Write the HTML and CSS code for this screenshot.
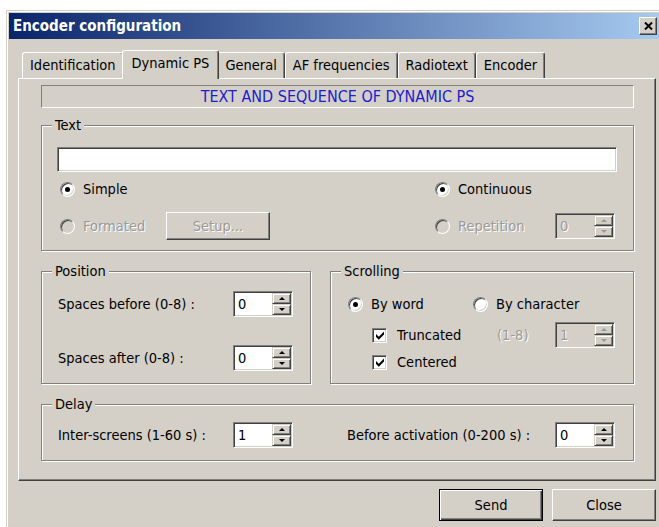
FILE: index.html
```html
<!DOCTYPE html>
<html lang="en">
<head>
<meta charset="utf-8">
<title>Encoder configuration</title>
<link rel="stylesheet" href="styles.css">
</head>
<body>
<div class="window">
  <div class="titlebar">
    <span class="title">Encoder configuration</span>
    <span class="caption-btn" aria-label="Close">
      <svg width="9" height="8" viewBox="0 0 9 8"><path d="M1 0.5 L8 7.5 M8 0.5 L1 7.5" stroke="#000" stroke-width="2" fill="none"/></svg>
    </span>
  </div>

  <div class="client">
    <div class="tabs">
      <span class="tab">Identification</span>
      <span class="tab tab-active">Dynamic PS</span>
      <span class="tab">General</span>
      <span class="tab">AF frequencies</span>
      <span class="tab">Radiotext</span>
      <span class="tab">Encoder</span>
    </div>

    <div class="panel">
      <div class="banner">TEXT AND SEQUENCE OF DYNAMIC PS</div>

      <section class="group group-text">
        <span class="group-title">Text</span>
        <div class="edit"></div>
        <div class="text-options">
          <label class="opt"><span class="radio on"></span>Simple</label>
          <label class="opt"><span class="radio on"></span>Continuous</label>
          <div class="opt-line">
            <label class="opt opt-formated disabled"><span class="radio"></span>Formated</label>
            <span class="btn btn-setup disabled">Setup...</span>
          </div>
          <div class="opt-line">
            <label class="opt opt-repetition disabled"><span class="radio"></span>Repetition</label>
            <div class="spin spin-disabled">
              <span class="spin-value">0</span>
              <span class="spin-arrows"><span class="spin-up"></span><span class="spin-down"></span></span>
            </div>
          </div>
        </div>
      </section>

      <div class="group-row">
        <section class="group group-position">
          <span class="group-title">Position</span>
          <div class="field-grid">
            <span class="field-label">Spaces before (0-8) :</span>
            <div class="spin">
              <span class="spin-value">0</span>
              <span class="spin-arrows"><span class="spin-up"></span><span class="spin-down"></span></span>
            </div>
            <span class="field-label">Spaces after (0-8) :</span>
            <div class="spin">
              <span class="spin-value">0</span>
              <span class="spin-arrows"><span class="spin-up"></span><span class="spin-down"></span></span>
            </div>
          </div>
        </section>

        <section class="group group-scrolling">
          <span class="group-title">Scrolling</span>
          <div class="scroll-line scroll-mode">
            <label class="opt opt-byword"><span class="radio on"></span>By word</label>
            <label class="opt"><span class="radio"></span>By character</label>
          </div>
          <div class="scroll-line scroll-trunc">
            <label class="opt opt-truncated"><span class="check"><svg width="10" height="10" viewBox="0 0 10 10"><polygon points="1,4 3.8,6.8 9,1.6 9,4.6 3.8,9.8 1,7" fill="#000"/></svg></span>Truncated</label>
            <span class="range-label disabled">(1-8)</span>
            <div class="spin spin-disabled">
              <span class="spin-value">1</span>
              <span class="spin-arrows"><span class="spin-up"></span><span class="spin-down"></span></span>
            </div>
          </div>
          <div class="scroll-line scroll-center">
            <label class="opt"><span class="check"><svg width="10" height="10" viewBox="0 0 10 10"><polygon points="1,4 3.8,6.8 9,1.6 9,4.6 3.8,9.8 1,7" fill="#000"/></svg></span>Centered</label>
          </div>
        </section>
      </div>

      <section class="group group-delay">
        <span class="group-title">Delay</span>
        <div class="delay-line">
          <span class="field-label label-inter">Inter-screens (1-60 s) :</span>
          <div class="spin">
            <span class="spin-value">1</span>
            <span class="spin-arrows"><span class="spin-up"></span><span class="spin-down"></span></span>
          </div>
          <span class="field-label label-before">Before activation (0-200 s) :</span>
          <div class="spin">
            <span class="spin-value">0</span>
            <span class="spin-arrows"><span class="spin-up"></span><span class="spin-down"></span></span>
          </div>
        </div>
      </section>
    </div>

    <div class="actions">
      <span class="btn btn-default">Send</span>
      <span class="btn">Close</span>
    </div>
  </div>
</div>
</body>
</html>
```

FILE: styles.css
```css
* {
  box-sizing: border-box;
}

html,
body {
  margin: 0;
  padding: 0;
  overflow: hidden;
  background: #fff;
}

body {
  font-family: "DejaVu Sans Condensed", "DejaVu Sans", "Liberation Sans", sans-serif;
  font-stretch: condensed;
  font-size: 14.5px;
  line-height: 16px;
  color: #000;
}

/* ---- window frame ---- */
.window {
  margin: 10px 0 0 6px;
  width: 657px;
  height: 540px;
  padding: 2px;
  background: #d4d0c8;
  border: 1px solid;
  border-color: #d4d0c8 #404040 #404040 #d4d0c8;
  box-shadow: inset 1px 1px #fff, inset -1px -1px #808080;
}

.titlebar {
  height: 26px;
  display: flex;
  align-items: center;
  justify-content: space-between;
  padding: 0 3px 0 4px;
  background: linear-gradient(90deg, #0a246a 0%, #a6caf0 100%);
}

.title {
  color: #fff;
  font-weight: bold;
  font-size: 15px;
  white-space: nowrap;
}

.caption-btn {
  width: 18px;
  height: 18px;
  display: flex;
  align-items: center;
  justify-content: center;
  background: #d4d0c8;
  border: 1px solid;
  border-color: #fff #404040 #404040 #fff;
  box-shadow: inset -1px -1px #808080;
}

.client {
  padding-top: 11px;
}

/* ---- tab strip ---- */
.tabs {
  display: flex;
  align-items: flex-end;
  height: 29px;
  margin-left: 13px;
  position: relative;
  z-index: 1;
}

.tab {
  height: 26px;
  margin-bottom: 1px;
  padding: 0 7px;
  border: 1px solid;
  border-bottom: 0;
  border-color: #fff #404040 #fff #fff;
  border-radius: 3px 3px 0 0;
  box-shadow: inset -1px 0 #808080;
  background: #d4d0c8;
  line-height: 24px;
  white-space: nowrap;
}

.tab-active {
  position: relative;
  z-index: 1;
  height: 29px;
  margin: 0 -2px;
  padding: 0 9px;
}

.panel {
  margin: -1px 0 0 9px;
  width: 638px;
  padding: 6px 21px 19px 22px;
  border: 1px solid;
  border-color: #fff #404040 #404040 #fff;
  box-shadow: inset -1px -1px #808080;
}

.banner {
  height: 23px;
  border: 1px solid;
  border-color: #808080 #fff #fff #808080;
  color: #1c1cd0;
  font-size: 16px;
  line-height: 21px;
  text-align: center;
}

/* ---- etched group boxes ---- */
.group {
  position: relative;
  border: 1px solid #808080;
  box-shadow: 1px 1px 0 #fff, inset 1px 1px 0 #fff;
}

.group-title {
  position: absolute;
  top: -9px;
  left: 10px;
  padding: 0 3px;
  line-height: 16px;
  background: #d4d0c8;
}

.group-text {
  margin-top: 17px;
  padding: 21px 16px 10px 15px;
}

.group-row {
  display: flex;
  gap: 19px;
  margin-top: 20px;
}

.group-position {
  width: 270px;
  padding: 19px 0 12px 16px;
}

.group-scrolling {
  width: 304px;
  padding: 21px 0 13px 17px;
}

.group-delay {
  margin-top: 20px;
  padding: 17px 0 12px 16px;
}

/* ---- edit field ---- */
.edit {
  height: 25px;
  background: #fff;
  border: 1px solid;
  border-color: #808080 #fff #fff #808080;
  box-shadow: inset 1px 1px #404040, inset -1px -1px #d4d0c8;
}

.text-options {
  display: grid;
  grid-template-columns: 375px 1fr;
  grid-template-rows: 22px 28px;
  row-gap: 12px;
  margin-top: 6px;
  padding-left: 3px;
}

.opt-line {
  display: flex;
  align-items: center;
}

.opt {
  display: flex;
  align-items: center;
  gap: 8px;
  white-space: nowrap;
}

.opt-formated {
  width: 106px;
}

.opt-repetition {
  width: 120px;
}

.disabled {
  color: #9a9a9a;
  text-shadow: 1px 1px 0 #fff;
}

/* ---- radio buttons and check boxes ---- */
.radio {
  flex: none;
  width: 15px;
  height: 15px;
  display: flex;
  align-items: center;
  justify-content: center;
  border-radius: 50%;
  border: 1px solid;
  border-color: #808080 #fff #fff #808080;
  box-shadow: inset 1px 1px #404040, inset -1px -1px #d4d0c8;
  background: #fff;
}

.radio.on::after {
  content: "";
  width: 5px;
  height: 5px;
  border-radius: 50%;
  background: #000;
}

.disabled .radio {
  background: #d4d0c8;
}

.check {
  flex: none;
  width: 15px;
  height: 15px;
  display: flex;
  align-items: center;
  justify-content: center;
  border: 1px solid;
  border-color: #808080 #fff #fff #808080;
  box-shadow: inset 1px 1px #404040, inset -1px -1px #d4d0c8;
  background: #fff;
}

.check svg {
  display: block;
}

/* ---- up/down spin boxes ---- */
.spin {
  flex: none;
  display: flex;
  width: 60px;
  height: 26px;
  padding: 1px;
  background: #fff;
  border: 1px solid;
  border-color: #808080 #fff #fff #808080;
  box-shadow: inset 1px 1px #404040, inset -1px -1px #d4d0c8;
}

.spin-value {
  flex: 1;
  padding-left: 3px;
  line-height: 22px;
}

.spin-arrows {
  display: flex;
  flex-direction: column;
  width: 19px;
}

.spin-up,
.spin-down {
  flex: 1;
  display: flex;
  align-items: center;
  justify-content: center;
  background: #d4d0c8;
  border: 1px solid;
  border-color: #d4d0c8 #404040 #404040 #d4d0c8;
  box-shadow: inset 1px 1px #fff, inset -1px -1px #808080;
}

.spin-up::after {
  content: "";
  border-left: 3px solid transparent;
  border-right: 3px solid transparent;
  border-bottom: 3px solid #000;
}

.spin-down::after {
  content: "";
  border-left: 3px solid transparent;
  border-right: 3px solid transparent;
  border-top: 3px solid #000;
}

.spin-disabled {
  background: #d4d0c8;
}

.spin-disabled .spin-value {
  color: #9a9a9a;
  text-shadow: 1px 1px 0 #fff;
}

.spin-disabled .spin-up::after {
  border-bottom-color: #9a9a9a;
}

.spin-disabled .spin-down::after {
  border-top-color: #9a9a9a;
}

/* ---- position group ---- */
.field-grid {
  display: grid;
  grid-template-columns: 175px 60px;
  grid-auto-rows: 26px;
  row-gap: 28px;
  align-items: center;
}

.field-label {
  white-space: nowrap;
}

/* ---- scrolling group ---- */
.scroll-line {
  display: flex;
  align-items: center;
}

.scroll-mode {
  height: 22px;
}

.opt-byword {
  width: 125px;
}

.scroll-trunc {
  height: 26px;
  margin-top: 7px;
  padding-left: 24px;
}

.opt-truncated {
  width: 125px;
  gap: 10px;
}

.range-label {
  width: 58px;
}

.scroll-center {
  height: 16px;
  margin-top: 6px;
  padding-left: 24px;
}

.scroll-center .opt {
  gap: 10px;
}

/* ---- delay group ---- */
.delay-line {
  display: flex;
  align-items: center;
}

.label-inter {
  width: 175px;
}

.label-before {
  width: 208px;
  margin-left: 54px;
}

/* ---- push buttons ---- */
.btn {
  display: flex;
  align-items: center;
  justify-content: center;
  width: 104px;
  height: 32px;
  background: #d4d0c8;
  border: 1px solid;
  border-color: #fff #404040 #404040 #fff;
  box-shadow: inset -1px -1px #808080, inset 1px 1px #d4d0c8;
}

.btn-default {
  border-color: #000;
  box-shadow: inset 1px 1px #fff, inset -1px -1px #404040, inset -2px -2px #808080;
}

.btn-setup {
  height: 28px;
}

.actions {
  display: flex;
  justify-content: flex-end;
  gap: 9px;
  width: 638px;
  margin: 8px 0 0 9px;
}
```
